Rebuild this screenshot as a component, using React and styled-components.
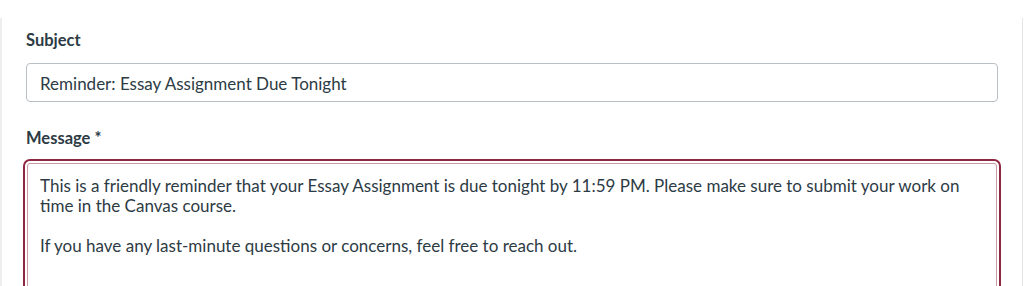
import styled, { createGlobalStyle } from "styled-components";

const GlobalStyle = createGlobalStyle`
  html, body {
    margin: 0;
    padding: 0;
    background: #fff;
  }
  body {
    font-family: Lato, "Noto Sans", sans-serif;
    color: #2d3b45;
    overflow: hidden;
  }
`;

const Panel = styled.section`
  box-sizing: border-box;
  width: 1023px;
  height: 268px;
  margin-top: 18px;
  padding: 10px 24px 0 24px;
  border-left: 2px solid #eceef0;
  border-right: 1px solid #e3e6e9;
  display: flex;
  flex-direction: column;
`;

const Field = styled.div`
  display: flex;
  flex-direction: column;
  gap: ${(p) => p.$gap}px;
  margin-bottom: ${(p) => p.$after || 0}px;
`;

const Label = styled.label`
  font-size: 16.5px;
  font-weight: 700;
  line-height: 24px;
  color: #2d3b45;
`;

const TextInput = styled.div`
  box-sizing: border-box;
  width: 972px;
  height: 39px;
  padding: 8px 13px 6px;
  border: 1px solid #b9c0c5;
  border-radius: 4px;
  font-size: 17px;
  line-height: 24px;
  color: #2d3b45;
  background: #fff;
`;

const TextArea = styled.div`
  box-sizing: border-box;
  width: 970px;
  min-height: 150px;
  margin-left: 1px;
  padding: 12px 12px;
  border: 1px solid #c59ca4;
  border-radius: 3px;
  outline: 2px solid #8e2741;
  outline-offset: 2px;
  font-size: 17px;
  line-height: 20px;
  color: #2d3b45;
  background: #fff;
`;

const Paragraph = styled.p`
  margin: 0 0 20px 0;
`;

export default function App() {
  return (
    <>
      <GlobalStyle />
      <Panel>
        <Field $gap={11} $after={24}>
          <Label>Subject</Label>
          <TextInput>Reminder: Essay Assignment Due Tonight</TextInput>
        </Field>
        <Field $gap={13}>
          <Label>Message *</Label>
          <TextArea>
            <Paragraph>
              This is a friendly reminder that your Essay Assignment is due tonight by
              11:59 PM. Please make sure to submit your work on time in the Canvas course.
            </Paragraph>
            <Paragraph>
              If you have any last-minute questions or concerns, feel free to reach out.
            </Paragraph>
          </TextArea>
        </Field>
      </Panel>
    </>
  );
}
